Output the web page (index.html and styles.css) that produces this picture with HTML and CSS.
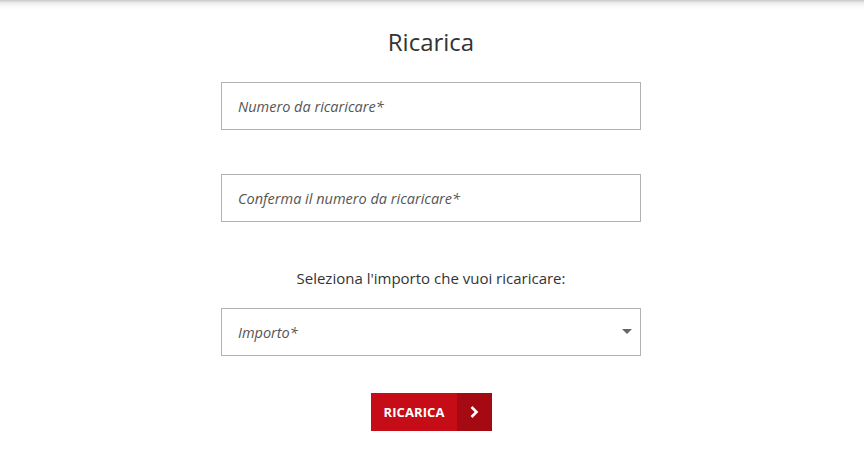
FILE: index.html
```html
<!DOCTYPE html>
<html>
<head>
    <meta charset="utf-8">
    <link rel="stylesheet" href="styles.css">
</head>
<body>
    <div class="topshadow"></div>
    <main class="ricarica">
        <h1 class="title">Ricarica</h1>
        <form class="form">
            <div class="field">
                <input class="input" type="text" placeholder="Numero da ricaricare*">
            </div>
            <div class="field">
                <input class="input" type="text" placeholder="Conferma il numero da ricaricare*">
            </div>
            <p class="label">Seleziona l'importo che vuoi ricaricare:</p>
            <div class="field select-wrap">
                <div class="input select">Importo*</div>
                <span class="caret"></span>
            </div>
            <div class="actions">
                <button type="button" class="btn">
                    <span class="btn-text">RICARICA</span>
                    <span class="btn-arrow">
                        <svg width="10" height="14" viewBox="0 0 10 14"><path d="M2.5 2 L7.5 7 L2.5 12" fill="none" stroke="#fff" stroke-width="2.6"/></svg>
                    </span>
                </button>
            </div>
        </form>
    </main>
</body>
</html>
```

FILE: styles.css
```css
body {
    margin: 0;
    background: #fff;
    font-family: "Open Sans", "DejaVu Sans", sans-serif;
    color: #333;
}

.topshadow {
    height: 10px;
    background: linear-gradient(to bottom, #c8c8c8 0, #eeeeee 3px, #fafafa 7px, #fff 10px);
}

.ricarica {
    width: 420px;
    margin: 0 auto;
    padding-right: 2px;
    display: flex;
    flex-flow: column;
}

.title {
    margin: 15px 0 0;
    font-size: 24px;
    font-weight: 400;
    line-height: 34px;
    text-align: center;
    color: #333;
}

.form {
    display: flex;
    flex-flow: column;
    margin-top: 23px;
}

.field {
    position: relative;
    margin-bottom: 44px;
}

.input {
    box-sizing: border-box;
    width: 420px;
    height: 48px;
    border: 1px solid #b3b3b3;
    padding: 0 16px;
    font-family: "Open Sans", sans-serif;
    font-size: 14.5px;
    font-style: italic;
    color: #555;
    outline: none;
    background: #fff;
}

.input::placeholder {
    color: #555;
    font-style: italic;
}

.select {
    display: flex;
    align-items: center;
}

.caret {
    position: absolute;
    right: 9px;
    top: 21px;
    border-left: 5px solid transparent;
    border-right: 5px solid transparent;
    border-top: 5px solid #666;
}

.label {
    margin: 0 0 18px;
    text-align: center;
    font-size: 15px;
    line-height: 24px;
    color: #333;
}

.field.select-wrap {
    margin-bottom: 37px;
}

.actions {
    display: flex;
    justify-content: center;
    padding-left: 1px;
}

.btn {
    display: flex;
    height: 38px;
    padding: 0;
    border: 0;
    background: #c60c17;
    font-family: "Open Sans", sans-serif;
    cursor: pointer;
}

.btn-text {
    display: flex;
    align-items: center;
    padding: 0 12px;
    font-size: 13px;
    font-weight: 700;
    letter-spacing: 0.1px;
    color: #fff;
}

.btn-arrow {
    width: 35px;
    display: flex;
    align-items: center;
    justify-content: center;
    background: #a50912;
}
```
